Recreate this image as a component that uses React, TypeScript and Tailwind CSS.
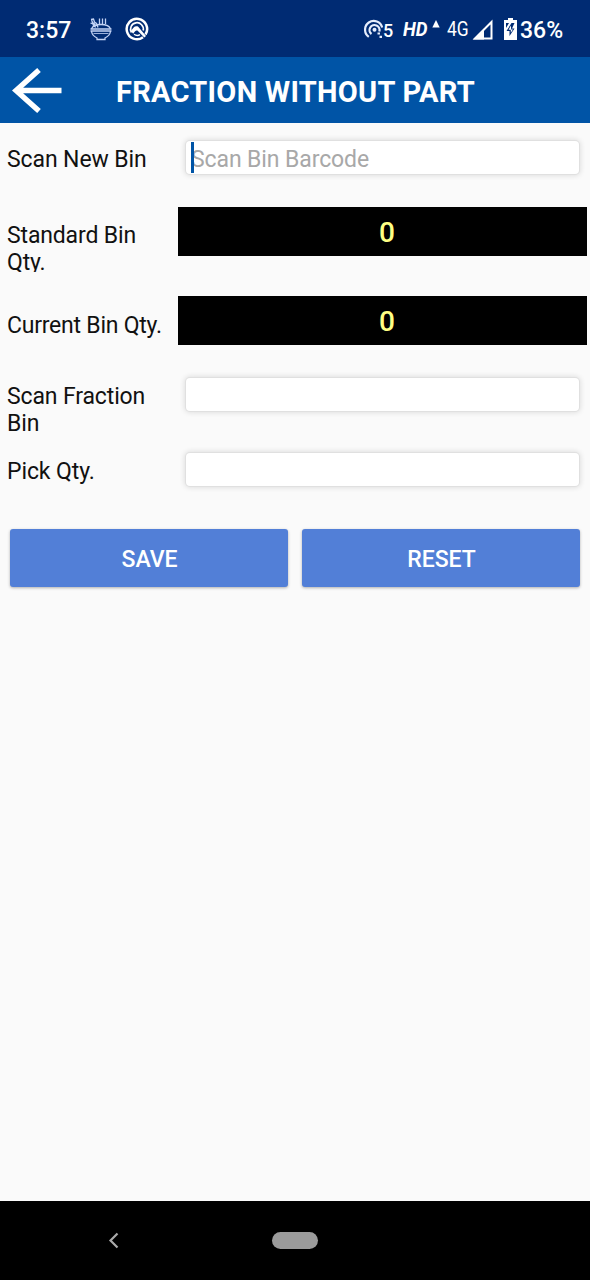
import React, { useState } from "react";

function StatusBar() {
  return (
    <div className="flex h-[57px] shrink-0 items-center bg-[#002b73] pl-[26px] pt-[4px] text-white">
      <span className="w-[63px] text-[23px] font-medium leading-[27px]">3:57</span>
      <svg className="-mt-[4px] shrink-0" width="24" height="24" viewBox="0 0 24 24" fill="none" stroke="#c3d3f5" strokeWidth="1.3">
        <path d="M1.500 12h21M1.500 14h21M2.500 14.500c.5 3 2.500 5 5.500 6.500v1.500h8V21c3-1.500 5-3.500 5.500-6.500" />
        <path d="M4.500 16.500h15" strokeWidth="0.800" />
        <path d="M2.500 12c1-3 4-4.500 9.500-4.500s8.500 1.500 9.500 4.500M2 2.500l2.500-.5 1 3 2 1.500 1.500 4M2.500 2.500l1 3 2 1.500 1 3.500M1.500 6l2.500 1 1 3M10.500 1.500v5.500M13.500 1.500v5.500M16.500 1.500v5.500" />
      </svg>
      <svg className="-mt-[3px] ml-[12px] shrink-0" width="24" height="24" viewBox="0 0 24 24" fill="none" stroke="#fff">
        <path d="M18 20.200A10.200 10.200 0 1 1 20.500 17.500" strokeWidth="2.500" />
        <path d="M6.500 15.500A6.400 6.400 0 1 1 18.200 13.500" strokeWidth="1.700" />
        <path d="M6.300 14.500C7.500 10.500 10 8.500 13 9.500L21 19l-1.700 1.500-6.600-6.800c-1.700-1-3 .8-4.500 3Z" fill="#fff" stroke="none" />
        <path d="M9 17.300c1.800 1.300 4.200 1.500 6 .4" strokeWidth="1.400" />
      </svg>
      <div className="ml-[215px] flex items-center">
        <svg className="-mt-[3px] shrink-0" width="20" height="22" viewBox="0 0 20 22" fill="none" stroke="#e5edfc" strokeWidth="2.200">
          <path d="M4.800 18.800A8.700 8.700 0 0 1 4.800 4.500 8.700 8.700 0 0 1 18.200 9.500" />
          <path d="M7.500 16A5 5 0 1 1 15.300 13.500" />
          <circle cx="10.500" cy="11.700" r="2" fill="#e5edfc" stroke="none" />
          <path d="M13.500 15.500h2.500M15.500 18.800h2.500" />
        </svg>
        <span className="-ml-[1px] w-[20px] text-[18px] font-medium leading-[20px]">5</span>
        <span className="-mt-[3px] w-[29px] origin-left scale-x-[0.930] text-[20px] font-bold italic leading-[22px]">HD</span>
        <svg className="-mt-[14px] shrink-0" width="8" height="8" viewBox="0 0 8 8" fill="#fff"><path d="M4 0 7.700 7.500H.3Z" /></svg>
        <span className="-mt-[3px] ml-[7px] w-[25px] origin-left scale-x-[0.830] text-[21px] leading-[22px]">4G</span>
        <svg className="-mt-[2px] shrink-0" width="22" height="22" viewBox="0 0 22 22"><path d="M19.500 3v16.500H3Z" fill="none" stroke="#fff" strokeWidth="2" /><path d="M1 20.500 12 9.500v11Z" fill="#fff" /></svg>
        <svg className="-mt-[4px] ml-[10px] shrink-0" width="13" height="22" viewBox="0 0 13 22">
          <path d="M4 0h5v2h4v20H0V2h4Z" fill="#fff" />
          <path d="M2 5h3L2 10ZM7.500 5 2.500 13h3v5l5-7.500H8l2.500-5.500Z" fill="#002b73" />
          <path d="M6.800 7.500 4.600 11.700h2.200v3L9 11.400H7.200Z" fill="#fff" />
        </svg>
        <span className="ml-[3px] text-[23px] font-medium leading-[27px]">36%</span>
      </div>
    </div>
  );
}

function Header() {
  return (
    <header className="flex h-[66px] shrink-0 items-center bg-[#0054a6] text-white">
      <button aria-label="Back" className="ml-[12px] h-[46px] w-[50px]">
        <svg width="50" height="46" viewBox="0 0 50 46" fill="none" stroke="#fff" strokeWidth="5.400">
          <path d="M49.500 23.500H5M27 3 4 23.500l23 20.500" />
        </svg>
      </button>
      <h1 className="ml-[54px] whitespace-nowrap pt-[3px] text-[29px] font-bold leading-[34px] tracking-[0.270px]">FRACTION WITHOUT PART</h1>
    </header>
  );
}

function Field({ value, onChange, label, placeholder, cursor }: {
  value: string; onChange: (value: string) => void; label: string; placeholder?: string; cursor?: boolean;
}) {
  return (
    <div className="relative ml-[8px] h-[33px] w-[393px] rounded-[4px] bg-white shadow-[0_0_0_1px_#e0e0e0,0_0_5px_2px_rgba(0,0,0,0.1)]">
      <input
        aria-label={label}
        value={value}
        onChange={(e) => onChange(e.target.value)}
        placeholder={placeholder}
        className="block h-[37px] w-full bg-transparent pl-[5px] text-[23px] tracking-[-0.100px] text-black outline-none placeholder:text-[#a8a8a8]"
      />
      {cursor && <span className="absolute left-[5px] top-[1px] h-[31px] w-[3px] bg-[#0054a6]" />}
    </div>
  );
}

function Quantity({ value }: { value: number }) {
  return <output className="flex h-[49px] w-[409px] items-center justify-center bg-black pl-[9px] pt-[3px] text-[28px] font-medium text-[#ffff84]">{value}</output>;
}

const buttonClass = "h-[58px] w-[278px] rounded-[3px] bg-[#527fd7] pl-[1px] pt-[5px] text-[23px] font-medium text-white shadow-[0_1px_3px_rgba(0,0,0,0.3)]";
const labelClass = "w-[171px] shrink-0 whitespace-pre-line text-[23px] leading-[27px]";

export default function App() {
  const [newBin, setNewBin] = useState("");
  const [fractionBin, setFractionBin] = useState("");
  const [pick, setPick] = useState("");
  const reset = () => {
    setNewBin("");
    setFractionBin("");
    setPick("");
  };

  return (
    <div className="flex h-[1280px] w-[590px] flex-col overflow-hidden bg-[#fafafa] font-['Roboto',sans-serif] text-[#111]">
      <StatusBar />
      <Header />
      <main className="flex-1">
        <div className="flex h-[84px] items-start pl-[7px] pt-[18px]">
          <div className={`${labelClass} pt-[5px] tracking-[-0.100px]`}>Scan New Bin</div>
          <Field label="Scan New Bin" value={newBin} onChange={setNewBin} placeholder="Scan Bin Barcode" cursor />
        </div>
        <div className="flex h-[89px] items-start pl-[7px]">
          <div className={`${labelClass} mt-[15px] h-[50px] overflow-hidden tracking-[-0.150px]`}>{"Standard Bin\nQty."}</div>
          <Quantity value={0} />
        </div>
        <div className="flex h-[70px] items-start pl-[7px]">
          <div className={`${labelClass} pt-[16px] tracking-[-0.230px]`}>Current Bin Qty.</div>
          <Quantity value={0} />
        </div>
        <div className="flex h-[75px] items-start pl-[7px] pt-[12px]">
          <div className={`${labelClass} pt-[5px] tracking-[-0.130px]`}>{"Scan Fraction\nBin"}</div>
          <Field label="Scan Fraction Bin" value={fractionBin} onChange={setFractionBin} />
        </div>
        <div className="flex h-[88px] items-start pl-[7px] pt-[12px]">
          <div className={`${labelClass} pt-[5px] tracking-[-0.100px]`}>Pick Qty.</div>
          <Field label="Pick Qty." value={pick} onChange={setPick} />
        </div>
        <div className="flex gap-[14px] pl-[10px]">
          <button className={buttonClass}>SAVE</button>
          <button className={buttonClass} onClick={reset}>RESET</button>
        </div>
      </main>
      <nav className="flex h-[79px] shrink-0 items-center bg-black pl-[108px]">
        <svg width="11" height="17" viewBox="0 0 11 17" fill="none" stroke="#aaa" strokeWidth="2.200"><path d="m9.500 1.500-7 7 7 7" /></svg>
        <div className="ml-[153px] h-[17px] w-[46px] rounded-full bg-[#9b9b9b]" />
      </nav>
    </div>
  );
}
